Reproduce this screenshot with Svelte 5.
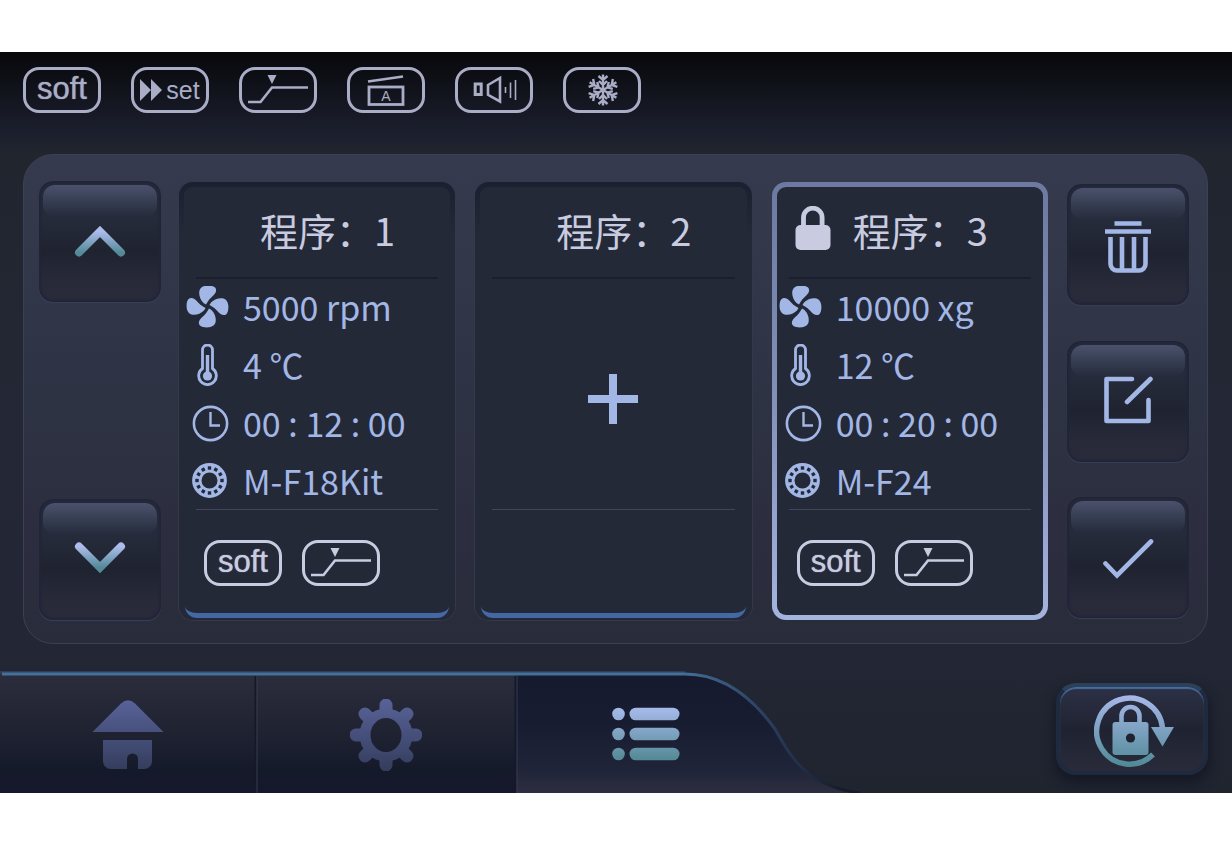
<script>
  const programs = [
    {
      id: 1,
      speed: "5000 rpm",
      temp: "4 ℃",
      time: "00 : 12 : 00",
      rotor: "M-F18Kit"
    },
    { id: 2, empty: true },
    {
      id: 3,
      locked: true,
      speed: "10000 xg",
      temp: "12 ℃",
      time: "00 : 20 : 00",
      rotor: "M-F24"
    }
  ];

  const fields = ["speed", "temp", "time", "rotor"];
  const blades = [0, 90, 180, 270];
  const arms = [0, 60, 120, 180, 240, 300];
  const holes = [0, 30, 60, 90, 120, 150, 180, 210, 240, 270, 300, 330];

  let selected = $state(3);
</script>

{#snippet ramp()}
  <svg width="72" height="40" viewBox="0 0 72 40">
    <path d="M6 32H18.5L30 17.5H66" fill="none" stroke="currentColor" stroke-width="2.6" />
    <path d="M25.500 5H34.500L30 14Z" fill="currentColor" />
  </svg>
{/snippet}

{#snippet fieldIcon(name)}
  <svg class="field-icon" width="44" height="44" viewBox="0 0 44 44">
    {#if name === "speed"}
      {#each blades as angle}
        <path
          transform="translate(21.500 20.500) rotate({angle})"
          d="M-4 -3.500C-7.500 -7 -9 -12 -8 -16C-6.500 -21 0 -21.500 4.500 -20.500C9 -19.500 9.500 -16 7.500 -13C5.500 -10 2 -8.500 0 -4.500L-1.500 -2Z"
          fill="currentColor"
        />
      {/each}
    {:else if name === "temp"}
      <path
        d="M16.500 24.500V6a5 5 0 0 1 10 0V24.500a8.800 8.800 0 1 1 -10 0Z"
        fill="none"
        stroke="currentColor"
        stroke-width="2.800"
      />
      <circle cx="21.500" cy="32" r="4.600" fill="currentColor" />
      <path d="M21.500 11V32" stroke="currentColor" stroke-width="3.400" />
    {:else if name === "time"}
      <circle cx="24.500" cy="21.500" r="16.600" fill="none" stroke="currentColor" stroke-width="2.6" />
      <path d="M24.500 10V23.500H34" fill="none" stroke="currentColor" stroke-width="2.4" />
    {:else}
      <circle cx="23.500" cy="20.500" r="12.700" fill="none" stroke="currentColor" stroke-width="9.4" />
      {#each holes as angle}
        <rect
          transform="translate(23.500 20.500) rotate({angle})"
          x="-1.700"
          y="-14.200"
          width="3.400"
          height="3.400"
          fill="#242938"
        />
      {/each}
    {/if}
  </svg>
{/snippet}

<svg class="defs" width="0" height="0" aria-hidden="true">
  <defs>
    <linearGradient id="ice" x1="0" y1="0" x2="0" y2="1">
      <stop offset="0" stop-color="#adbcec" />
      <stop offset="1" stop-color="#538a98" />
    </linearGradient>
    <linearGradient id="ice-lock" gradientUnits="userSpaceOnUse" x1="0" y1="0" x2="0" y2="72">
      <stop offset="0" stop-color="#a9b8ea" />
      <stop offset="1" stop-color="#4f8995" />
    </linearGradient>
    <linearGradient id="ice-list" gradientUnits="userSpaceOnUse" x1="0" y1="0" x2="0" y2="54">
      <stop offset="0" stop-color="#a9bbec" />
      <stop offset="1" stop-color="#528894" />
    </linearGradient>
    <linearGradient id="dim" gradientUnits="userSpaceOnUse" x1="0" y1="0" x2="0" y2="74">
      <stop offset="0" stop-color="#59639a" />
      <stop offset="1" stop-color="#343c5b" />
    </linearGradient>
  </defs>
</svg>

<main class="screen">
  <header class="status">
    <span class="badge soft">soft</span>
    <span class="badge set">
      <svg width="22" height="24" viewBox="0 0 22 24">
        <path d="M0 1L11 12L0 23ZM11 1L22 12L11 23Z" fill="currentColor" />
      </svg>
      set
    </span>
    <span class="badge">{@render ramp()}</span>
    <span class="badge">
      <svg width="72" height="40" viewBox="0 0 72 40">
        <g fill="none" stroke="currentColor">
          <path d="M18 11.500L53 6.500" stroke-width="2.6" />
          <rect x="19" y="17" width="34" height="17.500" stroke-width="2.8" />
        </g>
        <text x="36" y="31" text-anchor="middle" font-size="14" fill="currentColor">A</text>
      </svg>
    </span>
    <span class="badge">
      <svg width="72" height="40" viewBox="0 0 72 40">
        <g fill="none" stroke="currentColor">
          <rect x="17.200" y="14" width="6" height="10.500" stroke-width="3" />
          <path d="M30 15L42 8V31.500L30 24.800Z" stroke-width="2.6" />
          <path d="M47.500 17V23" stroke-width="1.6" />
          <path d="M52.500 12.500V28M57.500 10V30" stroke-width="1.6" />
        </g>
      </svg>
    </span>
    <span class="badge">
      <svg width="72" height="40" viewBox="0 0 72 40">
        {#each arms as angle}
          <path
            transform="translate(37 20) rotate({angle})"
            d="M0 0V-15.500M-4.500 -14L0 -10L4.500 -14M-4 -9L0 -5L4 -9"
            fill="none"
            stroke="currentColor"
            stroke-width="2.4"
          />
        {/each}
      </svg>
    </span>
  </header>

  <section class="panel">
    <div class="column">
      <button class="key" aria-label="Previous">
        <svg width="52" height="32" viewBox="0 0 52 32">
          <path d="M5 26.500L26 5.500L47 26.500" fill="none" stroke="url(#ice)" stroke-width="8" stroke-linecap="round" />
        </svg>
      </button>
      <button class="key" aria-label="Next">
        <svg width="52" height="38" viewBox="0 0 52 38">
          <path d="M5 5.500L26 26.500L47 5.500" fill="none" stroke="url(#ice)" stroke-width="8" stroke-linecap="round" />
        </svg>
      </button>
    </div>

    <div class="cards">
      {#each programs as program}
        <article class="card" class:selected={selected === program.id}>
          <h2>
            <span class="lock">
              {#if program.locked}
                <svg width="36" height="48" viewBox="0 0 36 48">
                  <path d="M8.500 22V11.500a9.300 9.300 0 0 1 18.600 0V22" fill="none" stroke="currentColor" stroke-width="4.800" />
                  <rect x=".5" y="19" width="35" height="25" rx="5" fill="currentColor" />
                </svg>
              {/if}
            </span>
            程序：{program.id}
          </h2>
          <div class="fields">
            {#if program.empty}
              <button class="add" aria-label="Add">
                <svg width="50" height="50" viewBox="0 0 50 50">
                  <path d="M25 0V50M0 25H50" stroke="currentColor" stroke-width="8" />
                </svg>
              </button>
            {:else}
              {#each fields as name}
                <p>{@render fieldIcon(name)}<span>{program[name]}</span></p>
              {/each}
            {/if}
          </div>
          <div class="tags">
            {#if !program.empty}
              <span class="badge soft">soft</span>
              <span class="badge">{@render ramp()}</span>
            {/if}
          </div>
        </article>
      {/each}
    </div>

    <div class="column actions">
      <button class="key" aria-label="Delete">
        <svg width="48" height="59" viewBox="0 -6 48 59">
          <g fill="none" stroke="currentColor" stroke-width="4.600">
            <path d="M10.500 2.500H37.500M1 10.500H47" />
            <path d="M6.500 16V43a6.500 6.500 0 0 0 6.500 6.500H35a6.500 6.500 0 0 0 6.500 -6.500V16M18 16V49M30 16V49" />
          </g>
        </svg>
      </button>
      <button class="key" aria-label="Edit">
        <svg width="49" height="50" viewBox="0 0 49 50">
          <path
            d="M28 3H2.500V45H44.500V24M46.500 3L23 26"
            fill="none"
            stroke="currentColor"
            stroke-width="4.600"
            stroke-linecap="round"
            stroke-linejoin="round"
          />
        </svg>
      </button>
      <button class="key" aria-label="Confirm">
        <svg width="51" height="42" viewBox="0 -2 51 42">
          <path d="M2.500 24.500L14 36.500L48 2.500" fill="none" stroke="currentColor" stroke-width="4.600" stroke-linecap="round" />
        </svg>
      </button>
    </div>
  </section>

  <footer>
    <nav>
      <svg class="nav-shape" viewBox="0 0 860 122" preserveAspectRatio="none">
        <defs>
          <linearGradient id="tab" x1="0" y1="0" x2="0" y2="1">
            <stop offset="0" stop-color="#2b2d3c" />
            <stop offset=".5" stop-color="#1f2231" />
            <stop offset=".8" stop-color="#151a2b" />
            <stop offset="1" stop-color="#15182b" />
          </linearGradient>
          <linearGradient id="tab-on" x1="0" y1="0" x2="0" y2="1">
            <stop offset="0" stop-color="#151a2f" />
            <stop offset=".4" stop-color="#181c31" />
            <stop offset=".8" stop-color="#202438" />
            <stop offset="1" stop-color="#2d2e40" />
          </linearGradient>
          <linearGradient id="edge" gradientUnits="userSpaceOnUse" x1="680" y1="0" x2="840" y2="0">
            <stop offset="0" stop-color="#447199" />
            <stop offset=".6" stop-color="#283a58" />
            <stop offset="1" stop-color="#171c2b" />
          </linearGradient>
        </defs>
        <rect y="3" width="516" height="119" fill="url(#tab)" />
        <path d="M516 3H685C722 3 752 26 775 58C790 84 805 115 860 122H516Z" fill="url(#tab-on)" />
        <path d="M255.500 5V122M515.500 5V122" stroke="#141828" stroke-width="2" />
        <path d="M257 5V122M517 5V122" stroke="#363b50" stroke-width="1" />
        <path d="M0 1.500H685" fill="none" stroke="#2f3d57" stroke-width="3" />
        <path d="M2 3H685C722 3 752 26 775 58C790 84 805 115 860 122" fill="none" stroke="url(#edge)" stroke-width="3" />
      </svg>
      <button class="tab" aria-label="Home">
        <svg width="72" height="74" viewBox="0 0 72 74">
          <path d="M.5 34L29 5.500Q36 -1 43 5.500L71.500 34Z" fill="url(#dim)" />
          <path
            d="M11 42H60V63a8 8 0 0 1 -8 8H46V61a5.500 5.500 0 0 0 -11 0V71H19a8 8 0 0 1 -8 -8Z"
            fill="url(#dim)"
          />
        </svg>
      </button>
      <button class="tab" aria-label="Settings">
        <svg width="74" height="74" viewBox="0 0 74 74">
          <mask id="hub">
            <rect width="74" height="74" fill="#fff" />
            <ellipse cx="37" cy="37" rx="15.500" ry="17" />
          </mask>
          <g mask="url(#hub)">
            <circle cx="37" cy="37" r="26.500" fill="url(#dim)" />
            <path
              d="M7 37H67M37 7V67M16 16L58 58M16 58L58 16"
              stroke="url(#dim)"
              stroke-width="13"
              stroke-linecap="round"
            />
          </g>
        </svg>
      </button>
      <button class="tab current" aria-label="Programs">
        <svg width="68" height="54" viewBox="0 0 68 54">
          <g fill="url(#ice-list)">
            {#each [0, 20, 40] as y}
              <circle cx="6.500" cy={y + 7} r="6.300" />
              <rect x="17.500" y={y + 0.7} width="50" height="12.600" rx="6.300" />
            {/each}
          </g>
        </svg>
      </button>
    </nav>
    <button class="unlock" aria-label="Screen lock">
      <svg width="80" height="72" viewBox="0 0 80 72">
        <g fill="none" stroke="url(#ice-lock)">
          <path d="M59 59.500A33 33 0 1 1 68.500 33" stroke-width="5.400" />
          <path d="M27.500 29V21a9 9 0 0 1 18 0V29" stroke-width="4.600" />
        </g>
        <path d="M57 32H80L68.500 51.500Z" fill="url(#ice-lock)" />
        <rect x="18.500" y="27" width="36" height="33" rx="3" fill="url(#ice-lock)" />
        <circle cx="36.500" cy="43" r="4.600" fill="#1f2331" />
      </svg>
    </button>
  </footer>
</main>

<style>
  :global(body) {
    margin: 0;
    background: #fff;
  }

  svg {
    display: block;
  }

  button {
    border: 0;
    padding: 0;
    background: none;
    cursor: pointer;
  }

  .defs {
    position: absolute;
  }

  .screen {
    margin: 52px 0 55px;
    background: linear-gradient(#08080b, #1b1f2d 80px, #21252e 102px, #242836 50%, #232735 600px, #1f242f);
    font-family: "Noto Sans CJK SC", sans-serif;
    overflow: hidden;
  }

  .status {
    display: flex;
    gap: 30px;
    padding: 15px 23px 41px;
    color: #a9adc6;
  }

  .badge {
    display: flex;
    align-items: center;
    justify-content: center;
    box-sizing: border-box;
    width: 78px;
    height: 46px;
    border: 3px solid;
    border-radius: 16px;
    font-family: "Liberation Sans", Arial, sans-serif;
    line-height: 40px;
  }

  .soft {
    font-size: 31px;
    padding-bottom: 2px;
    text-shadow: 0 0 1px currentColor;
  }

  .set {
    gap: 4px;
    font-size: 25px;
  }

  .panel {
    display: flex;
    gap: 18px;
    margin: 0 24px 0 23px;
    padding: 26px 18px 23px 15px;
    border: 1px solid #3b4054;
    border-radius: 30px;
    background: linear-gradient(#363a4e, #2e3445 45%, #2c2e3f 75%, #292c3b);
  }

  .column {
    display: flex;
    flex-direction: column;
    justify-content: space-between;
  }

  .actions {
    padding: 3px 0 2px;
  }

  .key {
    display: flex;
    align-items: center;
    justify-content: center;
    position: relative;
    width: 122px;
    height: 121px;
    border: 1px solid #202436;
    border-radius: 14px;
    background: linear-gradient(#252a3b, #262b3b 30%, #1f2330 58%, #282a3a 85%, #292b3b);
    box-shadow: 0 1px 1px #3a4058, inset 0 0 2px 1px #212538;
    color: #a3b7e6;
  }

  .key::before {
    content: "";
    position: absolute;
    top: 3px;
    left: 3px;
    right: 3px;
    height: 32px;
    border-radius: 12px;
    background: linear-gradient(#4b516c, #363e52 50%, #272c3c00);
  }

  .cards {
    display: grid;
    grid-template-columns: repeat(3, 1fr);
    gap: 20px;
    flex: 1;
    margin-right: 1px;
  }

  .card {
    position: relative;
    box-sizing: border-box;
    border: 5px solid transparent;
    border-radius: 14px;
    margin-top: 1px;
    background: linear-gradient(#242938, #242938) padding-box, linear-gradient(#1b1f2f, #242938 12%) border-box;
    box-shadow: 0 0 0 1px #34384a;
  }

  .card:not(.selected)::after {
    content: "";
    position: absolute;
    left: 1px;
    right: 1px;
    bottom: -3px;
    height: 10px;
    border-bottom: 5px solid #4468a4;
    border-radius: 0 0 12px 12px;
  }

  .selected {
    background: linear-gradient(#242938, #242938) padding-box,
      linear-gradient(#6c7aa1, #8390ba 50%, #a4b4df) border-box;
    box-shadow: none;
  }

  h2 {
    display: flex;
    align-items: center;
    gap: 22px;
    margin: 0 12px;
    padding: 0 0 4px 6px;
    height: 86px;
    border-bottom: 2px solid #1a1e2d;
    color: #c9cce0;
    font-size: 38px;
    font-weight: 400;
    line-height: 48px;
    white-space: nowrap;
  }

  .lock {
    width: 36px;
  }

  .fields {
    height: 230px;
    margin: 0 12px;
    border-bottom: 1px solid #41465a;
  }

  .fields p {
    display: flex;
    align-items: center;
    gap: 13px;
    height: 58px;
    margin: 0 0 0 -10px;
    color: #a3b7e6;
    font-size: 34px;
    line-height: 44px;
    white-space: nowrap;
  }

  .fields p span {
    padding-bottom: 2px;
  }

  .add {
    display: grid;
    place-items: center;
    width: 100%;
    height: 100%;
    padding-top: 10px;
    color: #a3b7e6;
  }

  .tags {
    display: flex;
    gap: 20px;
    height: 46px;
    padding: 30px 20px 29px;
    color: #c9cce0;
  }

  footer {
    display: flex;
    align-items: flex-start;
    justify-content: space-between;
    gap: 196px;
    padding: 27px 24px 0 0;
  }

  nav {
    display: grid;
    grid-template-columns: 256fr 260fr 344fr;
    flex: 1;
    position: relative;
    height: 122px;
  }

  .nav-shape {
    position: absolute;
    width: 100%;
    height: 100%;
  }

  .tab {
    display: grid;
    place-items: center;
    position: relative;
    padding-top: 6px;
  }

  .current {
    padding: 4px 84px 0 0;
  }

  .unlock {
    display: grid;
    place-items: center;
    width: 152px;
    height: 92px;
    margin-top: 12px;
    padding: 4px 0 0 4px;
    border: 4px solid #202a3f;
    border-top-color: #2c4159;
    border-radius: 20px;
    background: linear-gradient(#2d3146, #1f2331 50%, #292b3b);
    box-shadow: inset 0 2px 1px #466c9c, 0 6px 12px 2px #151925;
  }
</style>
